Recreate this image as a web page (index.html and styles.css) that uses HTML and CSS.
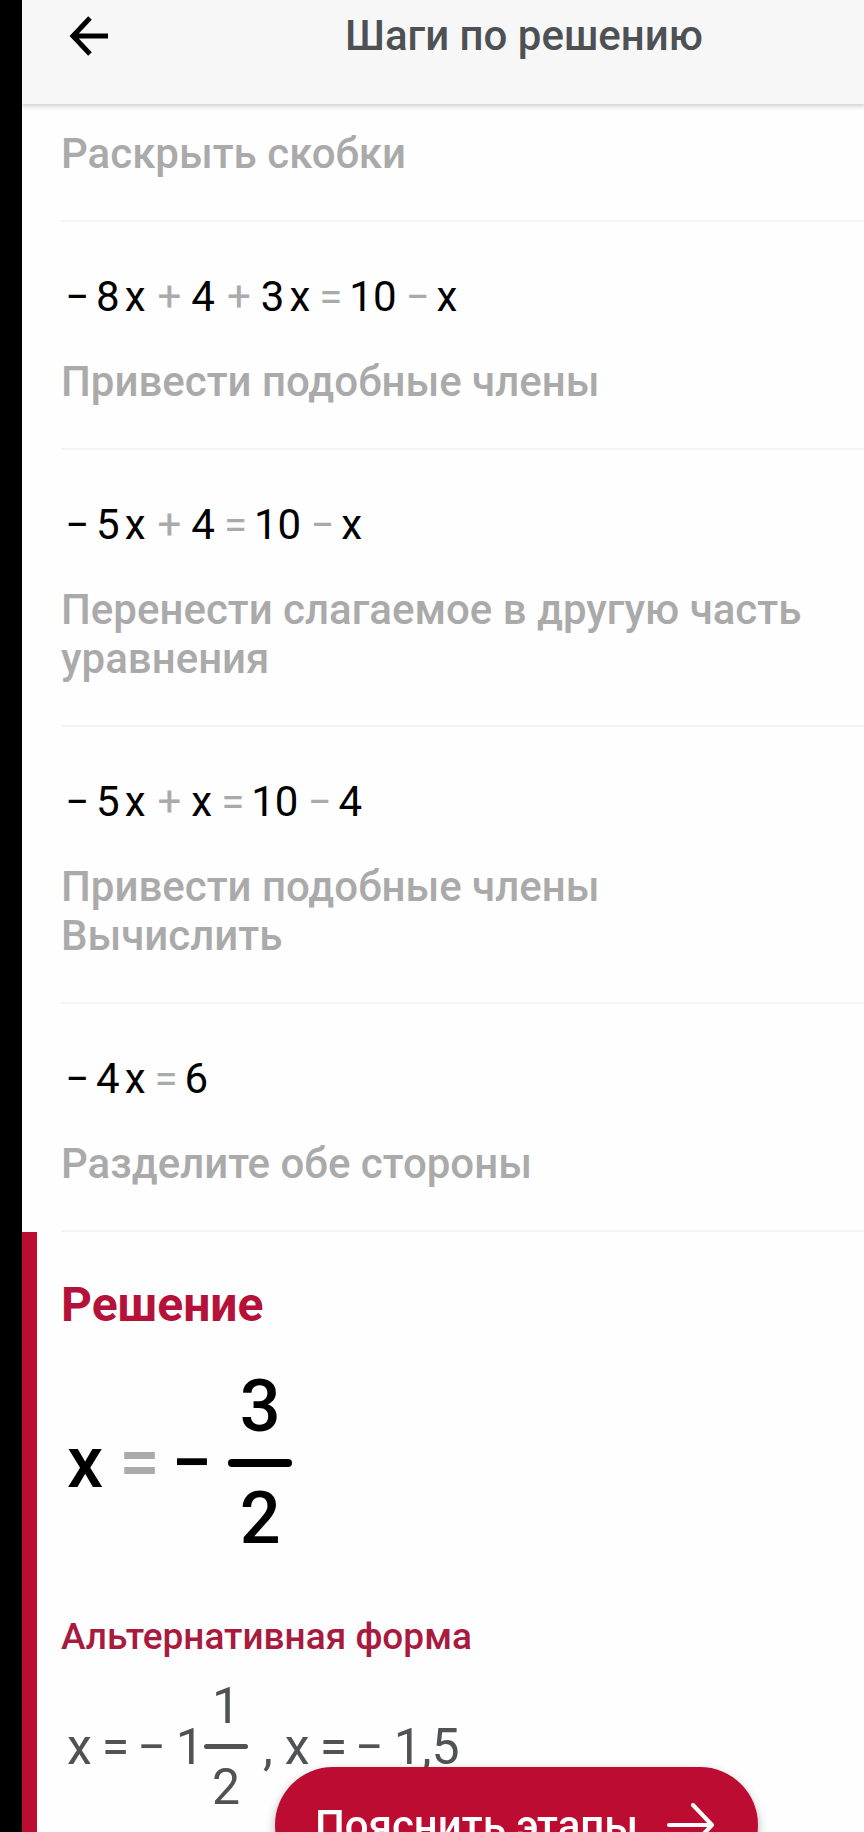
FILE: index.html
```
<!DOCTYPE html>
<html lang="ru">
    <head>
        <meta charset="UTF-8">
        <meta name="viewport" content="width=device-width, initial-scale=1.0">
        <title>Шаги по решению</title>
        <link rel="stylesheet" href="styles.css">
    </head>
    <body>
        <header class="header">
            <button class="back" type="button" aria-label="Назад">
                <svg width="40" height="40" viewBox="0 0 40 40" fill="none" stroke="#000" stroke-width="5">
                    <path d="M39 20H4M21 2L4 20l17 18"/>
                </svg>
            </button>
            <h1 class="title">Шаги по решению</h1>
        </header>
        <main class="main">
            <ol class="steps">
                <li class="step first">
                    <p class="hint">Раскрыть скобки</p>
                </li>
                <li class="step">
                    <div class="expr">
                        <span class="sign">−</span><span>8</span><span class="var">x</span><span class="op plus">+</span><span>4</span><span class="op plus">+</span><span>3</span><span class="var">x</span><span class="op">=</span><span>10</span><span class="op">−</span><span>x</span>
                    </div>
                    <p class="hint">Привести подобные члены</p>
                </li>
                <li class="step">
                    <div class="expr">
                        <span class="sign">−</span><span>5</span><span class="var">x</span><span class="op plus">+</span><span>4</span><span class="op">=</span><span>10</span><span class="op">−</span><span>x</span>
                    </div>
                    <p class="hint">Перенести слагаемое в другую часть уравнения</p>
                </li>
                <li class="step">
                    <div class="expr">
                        <span class="sign">−</span><span>5</span><span class="var">x</span><span class="op plus">+</span><span>x</span><span class="op">=</span><span>10</span><span class="op">−</span><span>4</span>
                    </div>
                    <p class="hint">Привести подобные члены<br>Вычислить</p>
                </li>
                <li class="step">
                    <div class="expr">
                        <span class="sign">−</span><span>4</span><span class="var">x</span><span class="op">=</span><span>6</span>
                    </div>
                    <p class="hint">Разделите обе стороны</p>
                </li>
            </ol>
            <section class="solution">
                <h2 class="solution-title">Решение</h2>
                <div class="result">
                    <span>x</span><span class="equal">=</span><span>−</span>
                    <span class="fraction">
                        <span class="num">3</span>
                        <span class="line"></span>
                        <span class="num">2</span>
                    </span>
                </div>
                <h3 class="alt-title">Альтернативная форма</h3>
                <div class="alt">
                    <span>x</span><span class="alt-op">=</span><span class="alt-sign">−</span><span>1</span>
                    <span class="fraction">
                        <span class="num">1</span>
                        <span class="line"></span>
                        <span class="num">2</span>
                    </span>
                    <span class="comma">,</span><span>x</span><span class="alt-op">=</span><span class="alt-sign">−</span><span>1,5</span>
                </div>
            </section>
        </main>
        <button class="explain" type="button">
            Пояснить этапы
            <svg width="48" height="44" viewBox="0 0 48 44" fill="none" stroke="#fff" stroke-width="4" stroke-linecap="round" stroke-linejoin="round">
                <path d="M2 22h43M26 2l19 20-19 20"/>
            </svg>
        </button>
    </body>
</html>
```
FILE: styles.css
```
*{
    box-sizing: border-box;
}

html{
    height: 100%;
    overflow: hidden;
}

body{
    display: flex;
    flex-direction: column;
    height: 100%;
    margin: 0;
    overflow: hidden;
    border-left: 22px solid #000;
    background-color: #fefefe;
    color: #000;
    font-family: Roboto, sans-serif;
}

h1, h2, h3, p, ol{
    margin: 0;
    padding: 0;
}

button{
    padding: 0;
    border: 0;
    font-family: inherit;
}

.header{
    display: flex;
    flex: none;
    align-items: flex-start;
    height: 104px;
    padding: 10px 0 0 47px;
    background-color: #f7f7f7;
    box-shadow: 0 1px 5px 1px rgba(0, 0, 0, .2);
}

.back{
    display: flex;
    align-items: center;
    height: 52px;
    background: none;
}

.title{
    margin-left: 236px;
    color: #4d5154;
    font-size: 42px;
    font-weight: 500;
    line-height: 52px;
}

.main{
    display: flex;
    flex: 1;
    flex-direction: column;
    min-height: 0;
}

/* шаги */
.steps{
    margin-left: 39px;
    list-style: none;
}

.step{
    padding: 50px 0 42px;
    border-bottom: 2px solid #f4f4f4;
}

.step.first{
    padding-top: 25px;
}

.expr{
    display: flex;
    padding-left: 4px;
    margin-bottom: 35px;
    font-size: 42px;
    line-height: 50px;
}

.sign{
    margin-right: 7px;
}

.var{
    margin-left: 5px;
}

.op{
    margin: 0 7px 0 9px;
    color: #aaa;
}

.op.plus{
    margin: 0 10px 0 12px;
}

.hint{
    padding-right: 39px;
    color: #aaa;
    font-size: 42px;
    font-weight: 500;
    line-height: 49px;
}

/* решение */
.solution{
    flex: 1;
    padding: 45px 0 0 24px;
    border-left: 15px solid #bc0c32;
}

.solution-title{
    color: #b5123a;
    font-size: 48px;
    font-weight: 700;
    line-height: 56px;
}

.result{
    display: flex;
    align-items: center;
    padding-left: 6px;
    margin-top: 32px;
    font-size: 72px;
    font-weight: 500;
    line-height: 84px;
}

.equal{
    margin: 0 12px 0 16px;
    color: #aaa;
}

.fraction{
    display: flex;
    flex-direction: column;
    align-items: center;
}

.line{
    border-radius: 4px;
    background-color: currentColor;
}

.result .fraction{
    margin-left: 16px;
}

.result .line{
    width: 64px;
    height: 8px;
    margin: 10px 0;
}

.alt-title{
    margin-top: 55px;
    color: #a81a3e;
    font-size: 37px;
    font-weight: 500;
    line-height: 42px;
}

.alt{
    display: flex;
    align-items: center;
    padding-left: 6px;
    margin-top: 18px;
    color: #505254;
    font-size: 50px;
    line-height: 60px;
}

.alt-op{
    margin: 0 8px 0 10px;
}

.alt-sign{
    margin-right: 10px;
}

.alt .line{
    width: 44px;
    height: 5px;
    margin: 8px 0;
}

.comma{
    margin: 0 12px 0 15px;
}

.explain{
    position: fixed;
    bottom: -51px;
    left: 275px;
    display: flex;
    align-items: center;
    justify-content: space-between;
    width: 483px;
    height: 116px;
    padding: 0 43px 0 40px;
    border-radius: 58px;
    background-color: #bc0c32;
    box-shadow: 0 4px 10px rgba(0, 0, 0, .3);
    color: #fff;
    font-size: 42px;
    font-weight: 500;
}
```
